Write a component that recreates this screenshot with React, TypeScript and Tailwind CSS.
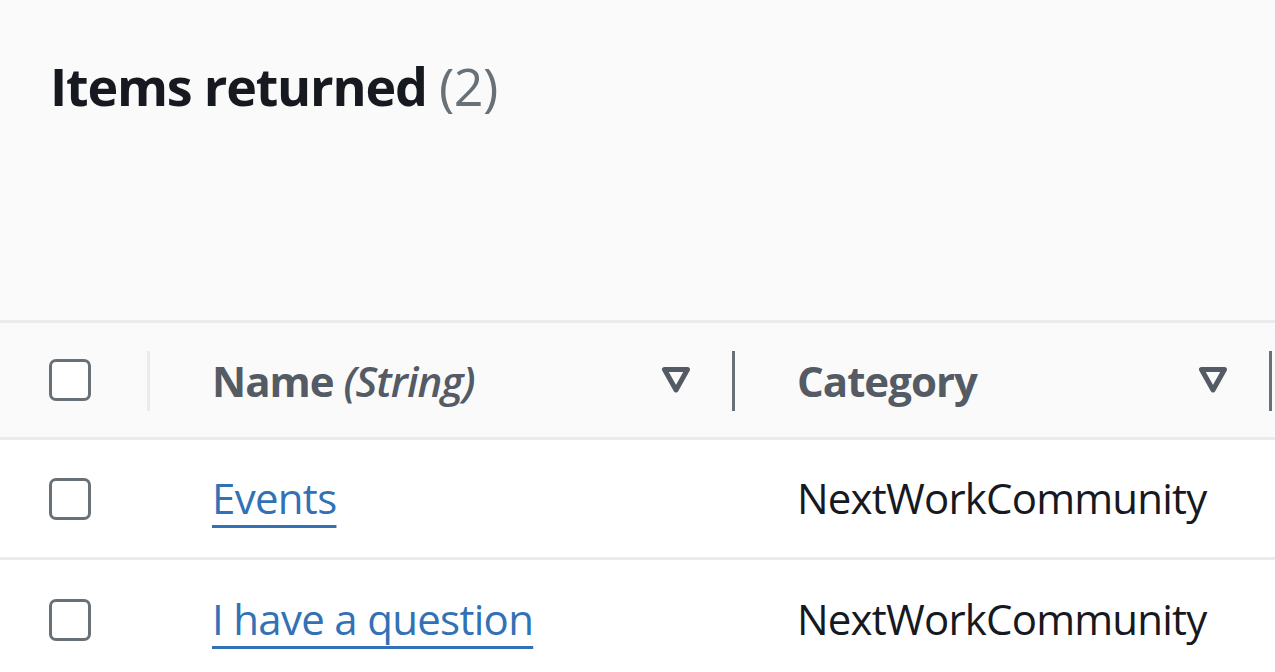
import React from "react";

const font = { fontFamily: '"Open Sans", "Noto Sans", sans-serif' };

function Checkbox() {
  return <div className="w-[42px] h-[42px] rounded-[7px] border-[3px] border-[#687078] bg-white" />;
}

function FilterIcon() {
  return (
    <svg width="30" height="28" viewBox="0 0 30 28" className="shrink-0">
      <path d="M3.5 3.5 H26.5 L15 24 Z" fill="none" stroke="#545b64" strokeWidth="5" strokeLinejoin="round" />
    </svg>
  );
}

function Row({ name, cat, last }: { name: string; cat: string; last?: boolean }) {
  return (
    <div className={`flex h-[120px] items-center bg-white ${last ? "" : "border-b-[3px] border-[#e9ebed]"}`}>
      <div className="w-[150px] pl-[49px] flex items-center">
        <Checkbox />
      </div>
      <div className="w-[585px] pl-[62px] pb-[3px]">
        <a className="text-[42px] text-[#3271b6] underline decoration-[3px] underline-offset-[11px] [text-decoration-skip-ink:none] tracking-[-0.7px]">{name}</a>
      </div>
      <div className="w-[537px] pl-[62px] pb-[3px] text-[42px] text-[#16191f] tracking-[-0.8px]">{cat}</div>
    </div>
  );
}

export default function App() {
  return (
    <div style={font} className="w-[1275px] h-[672px] overflow-hidden bg-[#fafafa]">
      <div className="h-[320px] pl-[50px] pt-[55px]">
        <h1 className="text-[52px] font-bold text-[#16191f] leading-[1.2] tracking-[-1.2px]">
          Items returned <span className="font-normal text-[#687078] tracking-[-0.5px]">(2)</span>
        </h1>
      </div>
      <div className="flex h-[120px] items-center border-y-[3px] border-[#e9ebed] bg-[#fafafa]">
        <div className="w-[150px] h-full flex items-center relative pl-[49px]">
          <Checkbox />
          <div className="absolute right-0 top-[28px] h-[60px] w-[3px] bg-[#e9ebed]" />
        </div>
        <div className="w-[585px] h-full flex items-center pl-[62px] pr-[44px] relative">
          <span className="flex-1 text-[42px] font-bold text-[#545b64] tracking-[-1px]">
            Name <i className="font-semibold">(String)</i>
          </span>
          <FilterIcon />
          <div className="absolute right-0 top-[28px] h-[60px] w-[3px] bg-[#687078]" />
        </div>
        <div className="w-[537px] h-full flex items-center pl-[62px] pr-[44px] relative">
          <span className="flex-1 text-[42px] font-bold text-[#545b64] tracking-[-1px]">Category</span>
          <FilterIcon />
          <div className="absolute right-0 top-[28px] h-[60px] w-[3px] bg-[#687078]" />
        </div>
      </div>
      <Row name="Events" cat="NextWorkCommunity" />
      <Row name="I have a question" cat="NextWorkCommunity" last />
    </div>
  );
}
